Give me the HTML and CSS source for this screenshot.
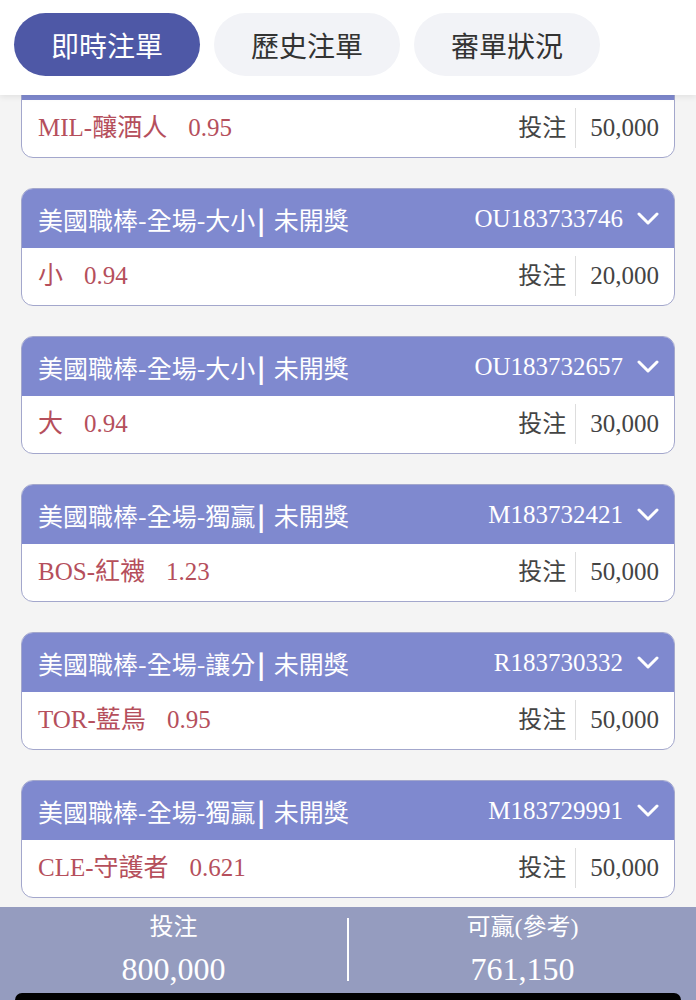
FILE: index.html
```html
<!DOCTYPE html>
<html lang="zh-Hant">
<head>
  <meta charset="UTF-8" />
  <meta name="viewport" content="width=device-width, initial-scale=1.0" />
  <title>即時注單</title>
  <link rel="stylesheet" href="styles.css">
</head>
<body>
  <div class="page">
    <div class="top-bar">
      <a class="tab active">即時注單</a>
      <a class="tab">歷史注單</a>
      <a class="tab">審單狀況</a>
    </div>

    <div class="scroll-area">
      <div class="bet-list">
        <!-- first card is scrolled up under the tabs -->
        <div class="bet-card">
          <div class="bet-head"></div>
          <div class="bet-body">
            <span class="pick">MIL-釀酒人<span class="odds">0.95</span></span>
            <span class="stake-label">投注</span>
            <span class="stake">50,000</span>
          </div>
        </div>

        <div class="bet-card">
          <div class="bet-head">
            <span class="bet-title">美國職棒-全場-大小<b>|</b> 未開獎</span>
            <span class="bet-id">OU183733746</span>
            <svg class="chevron" viewBox="0 0 22 14"><path d="M2 2 L11 11 L20 2" /></svg>
          </div>
          <div class="bet-body">
            <span class="pick">小<span class="odds">0.94</span></span>
            <span class="stake-label">投注</span>
            <span class="stake">20,000</span>
          </div>
        </div>

        <div class="bet-card">
          <div class="bet-head">
            <span class="bet-title">美國職棒-全場-大小<b>|</b> 未開獎</span>
            <span class="bet-id">OU183732657</span>
            <svg class="chevron" viewBox="0 0 22 14"><path d="M2 2 L11 11 L20 2" /></svg>
          </div>
          <div class="bet-body">
            <span class="pick">大<span class="odds">0.94</span></span>
            <span class="stake-label">投注</span>
            <span class="stake">30,000</span>
          </div>
        </div>

        <div class="bet-card">
          <div class="bet-head">
            <span class="bet-title">美國職棒-全場-獨贏<b>|</b> 未開獎</span>
            <span class="bet-id">M183732421</span>
            <svg class="chevron" viewBox="0 0 22 14"><path d="M2 2 L11 11 L20 2" /></svg>
          </div>
          <div class="bet-body">
            <span class="pick">BOS-紅襪<span class="odds">1.23</span></span>
            <span class="stake-label">投注</span>
            <span class="stake">50,000</span>
          </div>
        </div>

        <div class="bet-card">
          <div class="bet-head">
            <span class="bet-title">美國職棒-全場-讓分<b>|</b> 未開獎</span>
            <span class="bet-id">R183730332</span>
            <svg class="chevron" viewBox="0 0 22 14"><path d="M2 2 L11 11 L20 2" /></svg>
          </div>
          <div class="bet-body">
            <span class="pick">TOR-藍鳥<span class="odds">0.95</span></span>
            <span class="stake-label">投注</span>
            <span class="stake">50,000</span>
          </div>
        </div>

        <div class="bet-card">
          <div class="bet-head">
            <span class="bet-title">美國職棒-全場-獨贏<b>|</b> 未開獎</span>
            <span class="bet-id">M183729991</span>
            <svg class="chevron" viewBox="0 0 22 14"><path d="M2 2 L11 11 L20 2" /></svg>
          </div>
          <div class="bet-body">
            <span class="pick">CLE-守護者<span class="odds">0.621</span></span>
            <span class="stake-label">投注</span>
            <span class="stake">50,000</span>
          </div>
        </div>
      </div>
    </div>

    <div class="summary">
      <div class="totals">
        <div class="total">
          <span class="total-label">投注</span>
          <span class="total-value">800,000</span>
        </div>
        <div class="divider"></div>
        <div class="total">
          <span class="total-label">可贏(參考)</span>
          <span class="total-value">761,150</span>
        </div>
      </div>
      <div class="home-bar"></div>
    </div>
  </div>
</body>
</html>
```

FILE: styles.css
```css
html, body {
  margin: 0;
  padding: 0;
  height: 100%;
  background: #f4f4f4;
  font-family: "Liberation Serif", "Noto Sans CJK TC", serif;
  overflow: hidden;
}
.page {
  height: 100vh;
  display: flex;
  flex-direction: column;
}

/* tabs */
.top-bar {
  flex: none;
  height: 95px;
  box-sizing: border-box;
  padding: 13px 14px 0;
  display: flex;
  gap: 14px;
  background: #fff;
  box-shadow: 0 2px 6px rgba(0, 0, 0, 0.08);
  position: relative;
  z-index: 2;
}
.tab {
  width: 186px;
  height: 63px;
  border-radius: 32px;
  background: #f2f3f7;
  color: #333;
  font-family: "Noto Sans CJK TC", sans-serif;
  font-size: 28px;
  display: flex;
  align-items: center;
  justify-content: center;
}
.tab.active {
  background: #4e58a6;
  color: #fff;
}

/* list, scrolled a bit */
.scroll-area {
  flex: 1;
  min-height: 0;
  overflow: hidden;
}
.bet-list {
  margin-top: -55px;
  padding: 0 21px;
  display: flex;
  flex-direction: column;
  gap: 30px;
}
.bet-card {
  border: 1px solid #a3a7cc;
  border-radius: 12px;
  overflow: hidden;
  background: #fff;
}
.bet-head {
  height: 59px;
  background: #7f89cf;
  color: #fff;
  display: flex;
  align-items: center;
  padding: 0 15px 0 16px;
}
.bet-title {
  font-family: "Noto Sans CJK TC", sans-serif;
  font-size: 25px;
  flex: 1;
}
.bet-title b {
  font-weight: 900;
  margin: 0 3px 0 2px;
}
.bet-id {
  font-size: 25px;
  margin-right: 14px;
}
.chevron {
  width: 22px;
  height: 14px;
  fill: none;
  stroke: #fff;
  stroke-width: 3;
  stroke-linecap: round;
  stroke-linejoin: round;
}
.bet-body {
  height: 57px;
  display: flex;
  align-items: center;
  padding: 0 15px 0 16px;
  font-size: 25px;
  line-height: 40px;
}
.pick {
  flex: 1;
  color: #b54f5c;
  margin-top: -1px;
}
.odds {
  margin-left: 21px;
}
.stake-label {
  color: #444;
  font-size: 24px;
  padding-right: 9px;
  border-right: 1px solid #ddd;
  margin-top: -2px;
}
.stake {
  color: #444;
  padding-left: 14px;
  margin-top: -1px;
}

/* totals */
.summary {
  flex: none;
  height: 93px;
  background: #959cbf;
  display: flex;
  flex-direction: column;
}
.totals {
  height: 86px;
  box-sizing: border-box;
  padding-top: 2px;
  display: flex;
  align-items: flex-start;
}
.total {
  flex: 1;
  display: flex;
  flex-direction: column;
  align-items: center;
  color: #fff;
}
.divider {
  width: 2px;
  height: 63px;
  margin-top: 9px;
  background: #fff;
}
.total-label {
  font-size: 24px;
  line-height: 36px;
}
.total-value {
  font-size: 32px;
  line-height: 48px;
}
.home-bar {
  height: 7px;
  margin: 0 15px;
  background: #000;
  border-radius: 20px 20px 0 0;
}
```
